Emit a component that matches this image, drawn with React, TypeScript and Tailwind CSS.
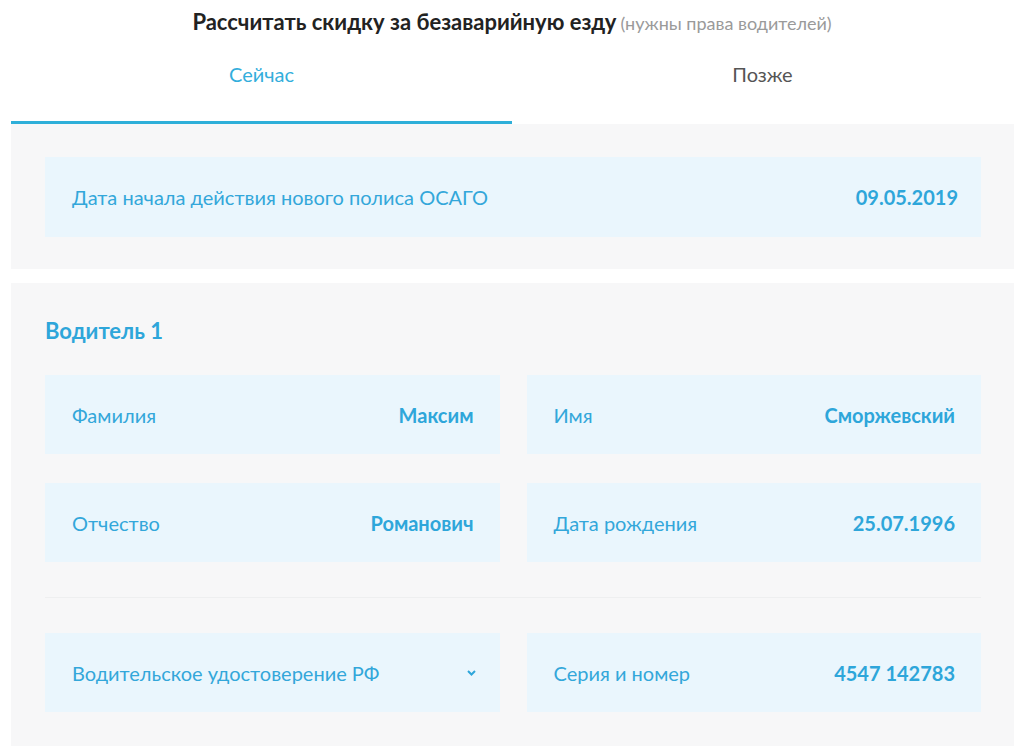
const FONT = { fontFamily: "Lato, 'Noto Sans', sans-serif" };

function Chevron() {
  return (
    <svg width="9" height="6" viewBox="0 0 9 6" className="text-[#2ea6da]">
      <path d="M1 1l3.5 3.5L8 1" fill="none" stroke="currentColor" strokeWidth="2" />
    </svg>
  );
}

function Field({ label, value, chevron }: { label: string; value?: string; chevron?: boolean }) {
  return (
    <div className="flex h-[79px] items-center justify-between bg-[#eaf6fd] pl-[27px] pr-[26px]">
      <span className="text-[20px] text-[#33a7da]">{label}</span>
      {chevron ? (
        <span className="mr-[-2px]">
          <Chevron />
        </span>
      ) : (
        <span className="text-[20px] font-bold text-[#2ea6da]">{value}</span>
      )}
    </div>
  );
}

export default function App() {
  return (
    <div className="min-h-[754px] bg-white" style={FONT}>
      <div className="pt-[6px] text-center leading-[32px]">
        <span className="text-[22px] font-bold text-[#222]">Рассчитать скидку за безаварийную езду</span>{" "}
        <span className="text-[18px] text-[#9a9a9a]">(нужны права водителей)</span>
      </div>

      <div className="mx-[11px] flex">
        <div className="flex h-[84px] w-[501px] justify-center border-b-[3px] border-[#2eafd9] pt-[22px] text-[20px] leading-[24px] text-[#33aedc]">
          Сейчас
        </div>
        <div className="flex h-[84px] flex-1 justify-center pt-[22px] text-[20px] leading-[24px] text-[#555]">
          Позже
        </div>
      </div>

      <div className="mx-[11px] w-[1003px] bg-[#f7f7f8] px-[34px] pb-[32px] pt-[33px]">
        <div className="mr-[-1px]">
          <div className="flex h-[80px] items-center justify-between bg-[#eaf6fd] pl-[27px] pr-[23px]">
            <span className="text-[20px] text-[#33a7da]">Дата начала действия нового полиса ОСАГО</span>
            <span className="text-[20px] font-bold text-[#2ea6da]">09.05.2019</span>
          </div>
        </div>
      </div>

      <div className="mx-[11px] mt-[14px] w-[1003px] bg-[#f7f7f8] px-[34px] pb-[34px] pt-[34px]">
        <div className="mr-[-1px]">
          <div className="text-[22px] font-bold leading-[28px] text-[#2ea6da]">Водитель 1</div>
          <div className="mt-[30px] grid grid-cols-2 gap-x-[27px] gap-y-[29px]">
            <Field label="Фамилия" value="Максим" />
            <Field label="Имя" value="Сморжевский" />
            <Field label="Отчество" value="Романович" />
            <Field label="Дата рождения" value="25.07.1996" />
          </div>
          <div className="mt-[35px] h-px bg-[#eeeff0]" />
          <div className="mt-[35px] grid grid-cols-2 gap-x-[27px]">
            <Field label="Водительское удостоверение РФ" chevron />
            <Field label="Серия и номер" value="4547 142783" />
          </div>
        </div>
      </div>
    </div>
  );
}
